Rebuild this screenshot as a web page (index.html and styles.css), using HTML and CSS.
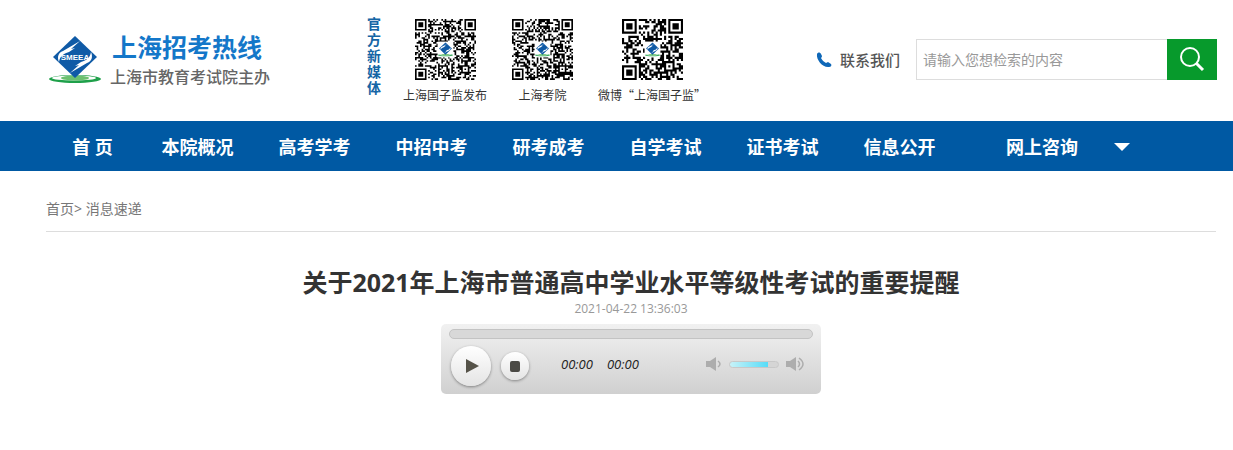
FILE: index.html
```html
<!DOCTYPE html>
<html lang="zh-CN">
<head>
    <meta charset="UTF-8">
    <meta name="viewport" content="width=device-width, initial-scale=1.0">
    <title>关于2021年上海市普通高中学业水平等级性考试的重要提醒</title>
    <link rel="stylesheet" href="styles.css">
</head>
<body>
<header class="header">
    <a href="#" class="logo">
        <svg class="logo-mark" width="54" height="50" viewBox="0 0 54 50">
            <g id="mark">
                <ellipse cx="27" cy="44" rx="26" ry="4" fill="#1fa04a"/>
                <ellipse cx="26" cy="43" rx="22" ry="2.6" fill="#fff"/>
                <ellipse cx="27" cy="43" rx="14" ry="2.6" fill="#6cc070"/>
                <path d="M27 1 49 22 27 43 5 22Z" fill="#0f5aa6"/>
                <path d="M32 6 15 16C10 18 9 22 11 27C12 21 15 19 21 17L27 13 23 14Z" fill="#fff"/>
                <path d="M22 38 39 28C44 26 45 22 43 17C42 23 39 25 33 27L27 31 31 30Z" fill="#fff"/>
            </g>
            <text x="27" y="25" text-anchor="middle" class="mark-text">SMEEA</text>
        </svg>
        <span class="logo-text">
            <strong>上海招考热线</strong>
            <span>上海市教育考试院主办</span>
        </span>
    </a>
    <div class="media">
        <div class="media-title">官方新媒体</div>
        <figure>
            <svg class="qr" data-size="37" data-seed="11"></svg>
            <figcaption>上海国子监发布</figcaption>
        </figure>
        <figure>
            <svg class="qr" data-size="37" data-seed="29"></svg>
            <figcaption>上海考院</figcaption>
        </figure>
        <figure>
            <svg class="qr" data-size="29" data-seed="53"></svg>
            <figcaption>微博“上海国子监”</figcaption>
        </figure>
    </div>
    <a href="#" class="contact">
        <svg width="16" height="16" viewBox="0 0 16 16"><path d="M1 2C2 0 4 0 5 2L6 4C6 5 5 6 5 6C6 8 8 10 10 11L12 10L15 12C16 13 15 15 13 15C7 16 0 8 1 2Z" fill="#0f68b8"/></svg>
        联系我们
    </a>
    <form class="search">
        <input type="text" aria-label="检索" placeholder="请输入您想检索的内容">
        <button type="button" aria-label="搜索">
            <svg width="26" height="26" viewBox="0 0 26 26" fill="none" stroke="#fff"><circle cx="11" cy="10" r="9" stroke-width="2"/><path d="M17 16 24 23" stroke-width="3"/></svg>
        </button>
    </form>
</header>

<nav class="nav">
    <a href="#">首 页</a>
    <a href="#">本院概况</a>
    <a href="#">高考学考</a>
    <a href="#">中招中考</a>
    <a href="#">研考成考</a>
    <a href="#">自学考试</a>
    <a href="#">证书考试</a>
    <a href="#">信息公开</a>
    <a href="#" class="more">网上咨询 <span class="arrow"></span></a>
</nav>

<main class="main">
    <div class="crumbs"><a href="#">首页</a>&gt; <a href="#">消息速递</a></div>
    <h1>关于2021年上海市普通高中学业水平等级性考试的重要提醒</h1>
    <div class="date">2021-04-22 13:36:03</div>
    <div class="player">
        <input type="range" class="seek" aria-label="播放进度" value="0">
        <div class="controls">
            <button type="button" class="play" aria-label="播放">
                <svg width="14" height="14" viewBox="0 0 14 14"><path d="M1 0 14 7 1 14Z" fill="#555248"/></svg>
            </button>
            <button type="button" class="stop" aria-label="停止">
                <svg width="10" height="11" viewBox="0 0 10 11"><rect width="10" height="11" rx="2" fill="#4b4a45"/></svg>
            </button>
            <div class="time"><span>00:00</span><span>00:00</span></div>
            <div class="volume">
                <svg width="18" height="16" viewBox="0 0 18 16"><path d="M1 5H5L11 1V15L5 11H1Z" fill="#adadad"/><path d="M13 5Q17 8 13 11" fill="none" stroke="#adadad" stroke-width="1.5"/></svg>
                <input type="range" aria-label="音量" value="80">
                <svg width="20" height="16" viewBox="0 0 20 16"><path d="M1 5H5L11 1V15L5 11H1Z" fill="#adadad"/><path d="M13 5Q16 8 13 11M14 2Q22 8 14 14" fill="none" stroke="#adadad" stroke-width="1.5"/></svg>
            </div>
        </div>
    </div>
</main>
<script src="qr.js"></script>
</body>
</html>
```
FILE: styles.css
```css
* {
    box-sizing: border-box;
}
body {
    margin: 0;
    background: #fff;
    color: #333;
    font-family: "Open Sans", "Noto Sans CJK SC", sans-serif;
    font-size: 14px;
}
a {
    color: inherit;
    text-decoration: none;
}
button {
    display: flex;
    align-items: center;
    justify-content: center;
    padding: 0;
    border: none;
    cursor: pointer;
}
.header {
    display: flex;
    min-height: 121px;
    padding: 0 16px 0 48px;
}
.logo {
    display: flex;
    align-items: flex-start;
    gap: 8px;
    padding-top: 32px;
}
.logo-mark {
    margin-top: 3px;
}
.mark-text {
    font: bold 8px "Liberation Sans", sans-serif;
    fill: #fff;
}
.logo-text {
    display: flex;
    flex-direction: column;
    width: 158px;
    font-size: 16px;
    line-height: 30px;
    font-weight: 500;
    color: #666;
    white-space: nowrap;
}
.logo-text strong {
    padding-left: 2px;
    font-size: 25px;
    color: #1477c9;
}
.media {
    display: flex;
    margin-left: 99px;
    padding-top: 16px;
}
.media-title {
    width: 14px;
    margin-right: 22px;
    line-height: 16px;
    font-weight: bold;
    color: #1565a5;
}
.media figure {
    display: flex;
    flex-direction: column;
    align-items: center;
    gap: 5px;
    margin: 3px 0 0;
    font-family: "Noto Sans CJK SC", sans-serif;
    font-size: 12px;
    line-height: 20px;
    white-space: nowrap;
}
.media figure + figure {
    margin-left: 25px;
}
.qr {
    width: 61px;
    height: 61px;
}
.contact {
    display: flex;
    align-items: center;
    gap: 8px;
    height: 41px;
    margin: 39px 16px 0 auto;
    font-size: 15px;
    font-weight: 500;
    color: #555;
    white-space: nowrap;
}
.search {
    display: flex;
    width: 301px;
    height: 41px;
    margin-top: 39px;
}
.search input {
    flex: 1;
    min-width: 0;
    padding: 0 6px;
    border: 1px solid #ddd;
    border-right: none;
    font: inherit;
}
.search input::placeholder {
    color: #999;
}
.search button {
    width: 50px;
    background: #079a2c;
}
.nav {
    display: grid;
    grid-template-columns: 93fr repeat(7, 117fr) 258fr;
    padding: 2px 17px 0 46px;
    background: #0059a3;
    color: #fff;
    font-size: 18px;
    font-weight: bold;
    line-height: 48px;
    text-align: center;
    white-space: nowrap;
}
.nav .more {
    display: flex;
    align-items: center;
    gap: 36px;
    padding-left: 48px;
}
.arrow {
    border: 8px solid transparent;
    border-top-color: #fff;
    border-bottom: none;
}
.main {
    padding: 0 17px 0 46px;
}
.crumbs {
    padding: 28px 0 12px;
    border-bottom: 1px solid #ddd;
    line-height: 20px;
    color: #777;
}
h1 {
    margin: 32px 0 0;
    font-size: 25px;
    line-height: 36px;
    text-align: center;
}
.date {
    font-size: 12px;
    line-height: 18px;
    text-align: center;
    color: #999;
}
.player {
    width: 380px;
    height: 70px;
    margin: 6px auto 0;
    padding: 5px 8px;
    border-radius: 5px;
    background: linear-gradient(#f1f1f1, #d0d0d0);
}
input[type="range"] {
    display: block;
    margin: 0;
    appearance: none;
    border-radius: 5px;
}
input[type="range"]::-webkit-slider-thumb {
    appearance: none;
    width: 1px;
    height: 1px;
}
.seek {
    width: 100%;
    height: 10px;
    border: 1px solid #c3c3c3;
    background: #d8d8d8;
}
.controls {
    display: flex;
    align-items: center;
    padding: 7px 8px 0 2px;
}
.play,
.stop {
    width: 40px;
    height: 40px;
    border-radius: 50%;
    background: linear-gradient(#fff, #e4e4e4);
    box-shadow: 0 1px 3px rgba(0, 0, 0, 0.4);
}
.play svg {
    margin-left: 2px;
}
.stop {
    width: 28px;
    height: 28px;
    margin-left: 10px;
}
.time {
    display: flex;
    gap: 14px;
    margin: 0 0 4px 32px;
    font-size: 13px;
    font-style: italic;
    color: #222;
}
.volume {
    display: flex;
    align-items: center;
    gap: 6px;
    margin: 0 0 4px auto;
}
.volume input {
    width: 50px;
    height: 7px;
    border: 1px solid #c8c8c8;
    background: linear-gradient(90deg, #c8f2f8, #55dcf8 80%, #d5d5d5 80%);
}
```
FILE: qr.js
```js
// Draws the code tiles: three finder squares, timing rows, seeded modules
function drawCode(svg) {
    const n = Number(svg.dataset.size);
    let seed = Number(svg.dataset.seed);
    const finders = [[0, 0], [n - 7, 0], [0, n - 7]];
    let d = '';

    for (let y = 0; y < n; y++) {
        for (let x = 0; x < n; x++) {
            seed = (seed * 1103515245 + 12345) % 2147483648;
            let on = seed / 2147483648 < 0.52;
            if (x === 6 || y === 6) {
                on = (x + y) % 2 === 0;
            }
            finders.forEach(([fx, fy]) => {
                const r = Math.max(Math.abs(x - fx - 3), Math.abs(y - fy - 3));
                if (r <= 4) {
                    on = r !== 2 && r !== 4;
                }
            });
            const align = Math.max(Math.abs(x - n + 7), Math.abs(y - n + 7));
            if (align <= 2) {
                on = align !== 1;
            }
            if (on) {
                d += `M${x} ${y}h1v1h-1z`;
            }
        }
    }

    const c = n / 2;
    const s = n * 0.26;
    svg.setAttribute('viewBox', `0 0 ${n} ${n}`);
    svg.innerHTML = `<path d="${d}" fill="#000"/>
        <rect x="${c - s / 2}" y="${c - s / 2}" width="${s}" height="${s}" fill="#fff"/>
        <svg x="${c - s / 2}" y="${c - s / 2}" width="${s}" height="${s}" viewBox="0 0 54 50"><use href="#mark"/></svg>`;
}

document.querySelectorAll('.qr').forEach(drawCode);
```
